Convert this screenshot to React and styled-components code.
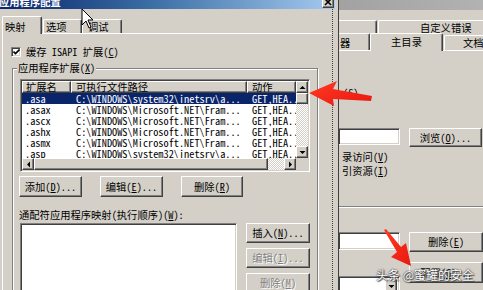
import React from 'react';
import styled, { createGlobalStyle, css } from 'styled-components';

const FONT = `"Noto Sans Mono CJK SC", "Noto Sans CJK SC", "Liberation Mono", monospace`;

const Global = createGlobalStyle`
  * { box-sizing: border-box; }
  html, body { margin: 0; padding: 0; background: #d4d0c8; }
  body { width: 483px; height: 290px; overflow: hidden; font-family: ${FONT}; font-size: 10.3px; color: #000; }
  #root { width: 483px; height: 290px; }
`;

const raised = css`
  background: #d4d0c8;
  border-top: 1px solid #fff;
  border-left: 1px solid #fff;
  border-right: 1px solid #404040;
  border-bottom: 1px solid #404040;
  box-shadow: inset -1px -1px 0 #808080;
`;

const sunken = css`
  background: #fff;
  border-top: 1px solid #808080;
  border-left: 1px solid #808080;
  border-right: 1px solid #fff;
  border-bottom: 1px solid #fff;
  box-shadow: inset 1px 1px 0 #404040, inset -1px -1px 0 #d4d0c8;
`;

const checker = css`
  background: repeating-conic-gradient(#d4d0c8 0% 25%, #ffffff 0% 50%) 0 0 / 2px 2px;
`;

const Screen = styled.div`
  position: relative;
  display: flex;
  width: 483px;
  height: 290px;
  overflow: hidden;
  background: #d4d0c8;
  line-height: 12px;
`;

/* ---------- foreground dialog ---------- */
const Foreground = styled.div`
  width: 339px;
  flex: none;
  display: flex;
  flex-direction: column;
  border-right: 1px solid #404040;
`;

const TitleBar = styled.div`
  width: 335px;
  height: 9px;
  flex: none;
  display: flex;
  justify-content: space-between;
  overflow: hidden;
  background: linear-gradient(90deg, #0a246a 0%, #3a6ea5 45%, #a6caf0 100%);
`;

const TitleText = styled.div`
  margin: -4px 0 0 -1px;
  color: #fff;
  font-weight: 700;
  white-space: nowrap;
`;

const CloseBtn = styled.div`
  ${raised};
  width: 12px;
  height: 12px;
  margin: -4px 1px 0 0;
  display: flex;
  align-items: center;
  justify-content: center;
`;

const Body = styled.div`
  flex: 1;
  display: flex;
  min-height: 0;
`;

const LeftCol = styled.div`
  width: 332px;
  flex: none;
  display: flex;
  flex-direction: column;
`;

const DottedStrip = styled.div`
  flex: 1;
  border-left: 1px dotted #404040;
`;

const TabRow = styled.div`
  display: flex;
  align-items: flex-end;
  height: 17px;
  margin-top: 7px;
  padding-left: 2px;
  flex: none;
`;

const Tab = styled.div`
  width: ${p => p.$w}px;
  margin-left: ${p => p.$ml || 0}px;
  height: ${p => (p.$active ? 18 : 14)}px;
  margin-bottom: ${p => (p.$active ? -1 : 0)}px;
  padding: ${p => (p.$active ? 4 : 1)}px 0 0 ${p => p.$pad}px;
  background: #d4d0c8;
  border-top: 1px solid #fff;
  border-left: 1px solid #fff;
  border-right: 1px solid #404040;
  box-shadow: inset -1px 0 0 #808080;
  border-top-left-radius: 2px;
  border-top-right-radius: 2px;
  position: relative;
  z-index: ${p => (p.$active ? 1 : 0)};
  white-space: nowrap;
`;

const Panel = styled.div`
  flex: 1;
  margin-left: 2px;
  border-top: 1px solid #fff;
  border-left: 1px solid #fff;
  padding: 13px 0 0 8px;
`;

const CheckRow = styled.div`
  display: flex;
  align-items: center;
  gap: 5px;
  height: 10px;
`;

const CheckBox = styled.div`
  ${sunken};
  width: 10px;
  height: 10px;
  flex: none;
  display: flex;
  align-items: center;
  justify-content: center;
`;

const Text = styled.span`
  white-space: nowrap;
`;

const U = styled.span`
  text-decoration: underline;
`;

const GroupBox = styled.div`
  margin: 11px 0 0 1px;
  width: 306px;
  height: 240px;
  border: 1px solid #808080;
  box-shadow: inset 1px 1px 0 #fff, 1px 1px 0 #fff;
  padding: 0 0 0 7px;
`;

const Legend = styled.div`
  width: fit-content;
  margin: -7px 0 0 -3px;
  padding: 0 1px;
  background: #d4d0c8;
  white-space: nowrap;
`;

const ListView = styled.div`
  ${sunken};
  margin-top: 5px;
  width: 290px;
  height: 93px;
  padding: 1px;
  display: grid;
  grid-template-columns: 274px 12px;
  grid-template-rows: 77px 12px;
`;

const ListContent = styled.div`
  overflow: hidden;
  background: #fff;
`;

const cols = `49px 176px 49px`;

const HeaderRow = styled.div`
  display: grid;
  grid-template-columns: ${cols};
  height: 12px;
`;

const HeaderCell = styled.div`
  ${raised};
  padding-left: ${p => p.$pad}px;
  line-height: 10px;
  white-space: nowrap;
`;

const Row = styled.div`
  display: grid;
  grid-template-columns: ${cols};
  height: 11px;
  line-height: 11px;
  background: ${p => (p.$sel ? '#0a246a' : '#fff')};
  color: ${p => (p.$sel ? '#fff' : '#000')};
`;

const Cell = styled.div`
  padding-left: ${p => p.$pad}px;
  overflow: hidden;
  white-space: nowrap;
`;

const VScroll = styled.div`
  display: flex;
  flex-direction: column;
`;

const HScroll = styled.div`
  display: flex;
`;

const ScrollBtn = styled.div`
  ${raised};
  width: 12px;
  height: 12px;
  flex: none;
  display: flex;
  align-items: center;
  justify-content: center;
`;

const Thumb = styled.div`
  ${raised};
  flex: none;
  width: ${p => p.$w || 12}px;
  height: ${p => p.$h || 12}px;
`;

const Track = styled.div`
  ${checker};
  flex: 1;
`;

const Corner = styled.div`
  background: #d4d0c8;
`;

const ButtonRow = styled.div`
  display: flex;
  gap: 18px;
  margin: 4px 0 0 -1px;
`;

const PushButton = styled.div`
  ${raised};
  width: ${p => p.$w}px;
  height: ${p => p.$h || 21}px;
  flex: none;
  display: flex;
  align-items: center;
  justify-content: center;
  white-space: nowrap;
  color: ${p => (p.$disabled ? '#808080' : '#000')};
  text-shadow: ${p => (p.$disabled ? '1px 1px 0 #fff' : 'none')};
`;

const WildLabel = styled.div`
  margin: 12px 0 0 -1px;
  white-space: nowrap;
`;

const WildRow = styled.div`
  display: flex;
  gap: 9px;
  margin-top: 2px;
`;

const WildList = styled.div`
  ${sunken};
  width: 217px;
  height: 80px;
`;

const SideButtons = styled.div`
  display: flex;
  flex-direction: column;
  gap: 5px;
`;

/* ---------- background dialog ---------- */
const Background = styled.div`
  flex: 1;
  min-width: 0;
  display: flex;
  flex-direction: column;
`;

const InactiveTitle = styled.div`
  height: 10px;
  flex: none;
  background: linear-gradient(90deg, #a2a2a2, #b2b2b2);
`;

const BgTabRow = styled.div`
  display: flex;
  align-items: flex-end;
  height: ${p => p.$h}px;
  margin-top: ${p => p.$mt || 0}px;
  flex: none;
`;

const BgTab = styled.div`
  width: ${p => p.$w}px;
  flex: none;
  margin-left: ${p => p.$ml || 0}px;
  height: ${p => p.$h}px;
  margin-bottom: ${p => (p.$active ? -1 : 0)}px;
  padding: ${p => p.$pt || 0}px 0 0 ${p => p.$pad || 0}px;
  text-align: ${p => (p.$center ? 'center' : 'left')};
  background: #d4d0c8;
  border-top: 1px solid #fff;
  border-left: ${p => (p.$noLeft ? 'none' : '1px solid #fff')};
  border-right: 1px solid #404040;
  box-shadow: inset -1px 0 0 #808080;
  border-top-left-radius: ${p => (p.$noLeft ? 0 : 2)}px;
  border-top-right-radius: 2px;
  position: relative;
  z-index: ${p => (p.$active ? 1 : 0)};
  white-space: nowrap;
`;

const BgPanel = styled.div`
  flex: 1;
  border-top: 1px solid #fff;
  display: flex;
  flex-direction: column;
`;

const BgLabel = styled.div`
  margin-top: ${p => p.$mt}px;
  padding-left: ${p => p.$pl}px;
  white-space: nowrap;
`;

const BgRow = styled.div`
  display: flex;
  align-items: flex-start;
  gap: 9px;
  margin-top: ${p => p.$mt}px;
`;

const TextBox = styled.div`
  ${sunken};
  border-left: none;
  width: 61px;
  height: ${p => p.$h}px;
  flex: none;
`;

const ComboBox = styled.div`
  ${sunken};
  border-left: none;
  width: 61px;
  height: 20px;
  flex: none;
  margin-top: 14px;
  padding: 2px 2px 2px 0;
  display: flex;
  justify-content: flex-end;
`;

const DropBtn = styled.div`
  ${raised};
  width: 12px;
  height: 100%;
  display: flex;
  align-items: center;
  justify-content: center;
`;

const Separator = styled.div`
  margin-top: 29px;
  height: 2px;
  border-top: 1px solid #808080;
  border-bottom: 1px solid #fff;
`;

/* ---------- overlays ---------- */
const Overlay = styled.svg`
  position: absolute;
  left: 0;
  top: 0;
  pointer-events: none;
`;

const Watermark = styled.div`
  position: absolute;
  left: 376px;
  top: 268px;
  font-family: "Noto Sans CJK SC", sans-serif;
  font-size: 12px;
  line-height: 14px;
  color: #fff;
  white-space: nowrap;
  text-shadow: 0 0 1px #333, 0 0 2px #555, 1px 1px 1px #444;
`;

const Tri = ({ dir }) => {
  const d = {
    up: 'M0.5 4 L3.5 1 L6.5 4 Z',
    down: 'M0.5 1 L3.5 4 L6.5 1 Z',
    left: 'M4 0.5 L1 3.5 L4 6.5 Z',
    right: 'M1 0.5 L4 3.5 L1 6.5 Z',
  }[dir];
  const vertical = dir === 'up' || dir === 'down';
  return (
    <svg width={vertical ? 7 : 5} height={vertical ? 5 : 7} viewBox={vertical ? '0 0 7 5' : '0 0 5 7'}>
      <path d={d} fill="#000" />
    </svg>
  );
};

const rows = [
  ['.asa', 'C:\\WINDOWS\\system32\\inetsrv\\a...', 'GET,HEA...', true],
  ['.asax', 'C:\\WINDOWS\\Microsoft.NET\\Fram...', 'GET,HEA...'],
  ['.ascx', 'C:\\WINDOWS\\Microsoft.NET\\Fram...', 'GET,HEA...'],
  ['.ashx', 'C:\\WINDOWS\\Microsoft.NET\\Fram...', 'GET,HEA...'],
  ['.asmx', 'C:\\WINDOWS\\Microsoft.NET\\Fram...', 'GET,HEA...'],
  ['.asp', 'C:\\WINDOWS\\system32\\inetsrv\\a...', 'GET,HEA...'],
];

export default function App() {
  return (
    <>
      <Global />
      <Screen>
        <Foreground>
          <TitleBar>
            <TitleText>应用程序配置</TitleText>
            <CloseBtn>
              <svg width="8" height="7" viewBox="0 0 8 7">
                <path d="M1 0 L7 6 M7 0 L1 6" stroke="#000" strokeWidth="1.6" />
              </svg>
            </CloseBtn>
          </TitleBar>
          <Body>
            <LeftCol>
              <TabRow>
                <Tab $active $w={40} $pad={2}>映射</Tab>
                <Tab $w={39} $ml={1} $pad={2}>选项</Tab>
                <Tab $w={40} $pad={5}>调试</Tab>
              </TabRow>
              <Panel>
                <CheckRow>
                  <CheckBox>
                    <svg width="7" height="6" viewBox="0 0 7 6">
                      <path d="M0.5 2.5 L2.5 4.5 L6.5 0.5" stroke="#000" strokeWidth="1.6" fill="none" />
                    </svg>
                  </CheckBox>
                  <Text>缓存 ISAPI 扩展(<U>C</U>)</Text>
                </CheckRow>
                <GroupBox>
                  <Legend>应用程序扩展(<U>X</U>)</Legend>
                  <ListView>
                    <ListContent>
                      <HeaderRow>
                        <HeaderCell $pad={3}>扩展名</HeaderCell>
                        <HeaderCell $pad={4}>可执行文件路径</HeaderCell>
                        <HeaderCell $pad={4}>动作</HeaderCell>
                      </HeaderRow>
                      {rows.map(([ext, path, act, sel]) => (
                        <Row key={ext} $sel={sel}>
                          <Cell $pad={3}>{ext}</Cell>
                          <Cell $pad={5}>{path}</Cell>
                          <Cell $pad={5}>{act}</Cell>
                        </Row>
                      ))}
                    </ListContent>
                    <VScroll>
                      <ScrollBtn><Tri dir="up" /></ScrollBtn>
                      <Thumb $h={11} />
                      <Track />
                      <ScrollBtn><Tri dir="down" /></ScrollBtn>
                    </VScroll>
                    <HScroll>
                      <ScrollBtn><Tri dir="left" /></ScrollBtn>
                      <Thumb $w={234} />
                      <Track />
                      <ScrollBtn><Tri dir="right" /></ScrollBtn>
                    </HScroll>
                    <Corner />
                  </ListView>
                  <ButtonRow>
                    <PushButton $w={63}>添加(<U>D</U>)...</PushButton>
                    <PushButton $w={63}>编辑(<U>E</U>)...</PushButton>
                    <PushButton $w={62}>删除(<U>R</U>)</PushButton>
                  </ButtonRow>
                  <WildLabel>通配符应用程序映射(执行顺序)(<U>W</U>):</WildLabel>
                  <WildRow>
                    <WildList />
                    <SideButtons>
                      <PushButton $w={64} $h={20}>插入(<U>N</U>)...</PushButton>
                      <PushButton $w={64} $h={20} $disabled>编辑(<U>I</U>)...</PushButton>
                      <PushButton $w={64} $h={20} $disabled>删除(<U>M</U>)</PushButton>
                    </SideButtons>
                  </WildRow>
                </GroupBox>
              </Panel>
            </LeftCol>
            <DottedStrip />
          </Body>
        </Foreground>

        <Background>
          <InactiveTitle />
          <BgTabRow $h={13} $mt={10}>
            <BgTab $w={38} $h={13} $noLeft />
            <BgTab $w={140} $h={13} $ml={1} $pad={41} $pt={1}>自定义错误</BgTab>
          </BgTabRow>
          <BgTabRow $h={17}>
            <BgTab $w={31} $h={17} $noLeft $pad={1} $pt={3}>器</BgTab>
            <BgTab $w={73} $h={18} $active $center $pt={2}>主目录</BgTab>
            <BgTab $w={60} $h={15} $ml={1} $pad={18} $pt={1}>文档</BgTab>
          </BgTabRow>
          <BgPanel>
            <BgLabel $mt={36} $pl={4}>(<U>S</U>)</BgLabel>
            <BgRow $mt={29}>
              <TextBox $h={17} />
              <PushButton $w={73} $h={19}>浏览(<U>O</U>)...</PushButton>
            </BgRow>
            <BgLabel $mt={4} $pl={3}>录访问(<U>V</U>)</BgLabel>
            <BgLabel $mt={2} $pl={3}>引资源(<U>I</U>)</BgLabel>
            <Separator />
            <BgRow $mt={24}>
              <TextBox $h={18} />
              <PushButton $w={74} $h={20}>删除(<U>E</U>)</PushButton>
            </BgRow>
            <BgRow $mt={10}>
              <ComboBox>
                <DropBtn><Tri dir="down" /></DropBtn>
              </ComboBox>
              <PushButton $w={74} $h={21}>配置(<U>G</U>)...</PushButton>
            </BgRow>
          </BgPanel>
        </Background>

        <Overlay width="483" height="290" viewBox="0 0 483 290">
          <defs>
            <linearGradient id="redg" x1="0" y1="0" x2="1" y2="1">
              <stop offset="0" stopColor="#ff3a22" />
              <stop offset="1" stopColor="#e8180f" />
            </linearGradient>
          </defs>
          <path d="M309 93 L337 81 L333 89 L372 96 L371 101 L333 99 L334 106 Z" fill="url(#redg)" />
          <path d="M384 230 L386 229 L401 247 L406 243 L411 266 L391 257 L397 252 Z" fill="url(#redg)" />
          <path d="M82 9 L82 25 L86 21 L89 28 L91 27 L88 20 L93 20 Z" fill="#fff" stroke="#000" strokeWidth="1" strokeLinejoin="miter" />
        </Overlay>
        <Watermark>头条 @蜜罐的安全</Watermark>
      </Screen>
    </>
  );
}
